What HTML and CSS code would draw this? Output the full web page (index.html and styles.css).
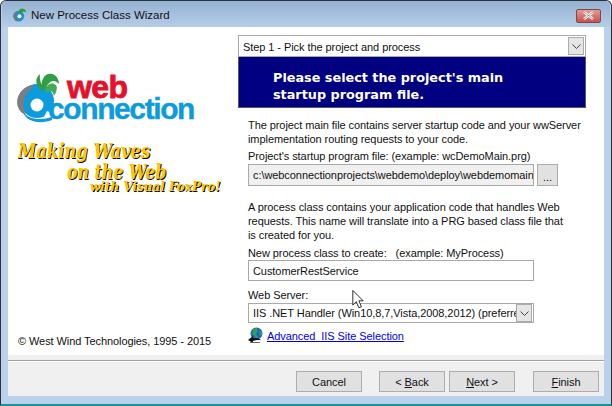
FILE: index.html
```html
<!DOCTYPE html>
<html lang="en">
<head>
    <meta charset="UTF-8">
    <title>New Process Class Wizard</title>
    <link rel="stylesheet" href="styles.css">
</head>
<body>
    <div class="window">
        <div class="titlebar">
            <svg class="app-icon" width="15" height="15" viewBox="0 0 18 18">
                <circle cx="8" cy="11" r="6.5" fill="#1b8fd0"/>
                <path d="M4 6a7 7 0 0 0 1 11l2-1a6 6 0 0 1-1-8z" fill="#777"/>
                <circle cx="9" cy="11" r="2.4" fill="#fff"/>
                <path d="M8 6c0-3 3-5 5-4 2 0 4 2 4 4-2-1-4-1-5 0l-1 3z" fill="#2e9b3f"/>
            </svg>
            <span class="title">New Process Class Wizard</span>
            <div class="close-btn">
                <svg width="13" height="9" viewBox="0 0 13 9"><path d="M2 1l9 7M11 1l-9 7" stroke="#fff" stroke-width="2.4" fill="none"/><path d="M2 1l9 7M11 1l-9 7" stroke="#555" stroke-width=".6" fill="none"/></svg>
            </div>
        </div>
        <div class="client">
            <div class="main">
                <div class="left">
                    <div class="logo">
                        <svg class="logo-mark" width="50" height="60" viewBox="0 0 50 60">
                            <circle cx="22" cy="31" r="17" fill="#0c9bdc"/>
                            <path d="M8 42C14 50 26 51 37 46L37 50C26 54 12 53 8 42Z" fill="#0c9bdc"/>
                            <path d="M17 15C6 17 0 28 3 37C5 42 8 44 11 45C8 40 8 32 10 27C12 22 15 19 19 17Z" fill="#7b7d80"/>
                            <circle cx="22" cy="35" r="6.5" fill="#fff"/>
                            <path d="M32 41a7 7 0 0 1 5 6l-9 2z" fill="#fff"/>
                            <path d="M26 20C20 15 20 8 25 4C24 9 26 14 29 19Z" fill="#2f9e45"/>
                            <path d="M27 20C25 10 30 2 37 4C41 5 44 9 44 14C39 9 34 10 30 20Z" fill="#2f9e45"/>
                            <path d="M30 21C32 13 37 12 41 15C43 18 41 23 39 26C38 21 35 19 31 23Z" fill="#43ab55"/>
                        </svg>
                        <div class="logo-web">web</div>
                        <div class="logo-conn">connection</div>
                    </div>
                    <div class="slogan">
                        <div class="slogan-line line-1">Making Waves</div>
                        <div class="slogan-line line-2">on the Web</div>
                        <div class="slogan-line line-3">with Visual FoxPro!</div>
                    </div>
                    <div class="copyright">© West Wind Technologies, 1995 - 2015</div>
                </div>
                <div class="right">
                    <div class="combo step-combo">
                        <span class="combo-text">Step 1 - Pick the project and process</span>
                        <span class="combo-arrow"><svg width="9" height="5" viewBox="0 0 9 5"><path d="M.5.5l4 4 4-4" stroke="#444" fill="none"/></svg></span>
                    </div>
                    <div class="banner">Please select the project's main<br>startup program file.</div>
                    <div class="form">
                        <p class="para first">The project main file contains server startup code and your wwServer<br>implementation routing requests to your code.</p>
                        <label class="field-label">Project's startup program file: (example: wcDemoMain.prg)</label>
                        <div class="file-row">
                            <div class="textbox readonly">c:\webconnectionprojects\webdemo\deploy\webdemomain.prg</div>
                            <div class="browse-btn">...</div>
                        </div>
                        <p class="para second">A process class contains your application code that handles Web<br>requests. This name will translate into a PRG based class file that<br>is created for you.</p>
                        <label class="field-label tight">New process class to create: &nbsp; (example: MyProcess)</label>
                        <div class="textbox class-name">CustomerRestService</div>
                        <label class="field-label server-label">Web Server:</label>
                        <div class="combo server-combo">
                            <span class="combo-text">IIS .NET Handler (Win10,8,7,Vista,2008,2012) (preferred)</span>
                            <span class="combo-arrow"><svg width="9" height="5" viewBox="0 0 9 5"><path d="M.5.5l4 4 4-4" stroke="#444" fill="none"/></svg></span>
                        </div>
                        <div class="link-row">
                            <svg width="17" height="17" viewBox="0 0 17 17">
                                <circle cx="9.5" cy="6.5" r="6" fill="#1f5fd0"/>
                                <path d="M6 2l4-1 1 3-2 3 2 3-2 2-1-3-3-2zM12 3l3 2v3l-2 1z" fill="#2fa34a"/>
                                <path d="M1 13l5-4v2c3 0 6 0 8 2-2 0-5 0-8 1v2z" fill="#111"/>
                                <path d="M3 15h10v1H3z" fill="#666"/>
                            </svg>
                            <a class="link">Advanced &nbsp;IIS Site Selection</a>
                        </div>
                    </div>
                </div>
            </div>
            <div class="footer">
                <div class="divider"></div>
                <div class="buttons">
                    <div class="btn">Cancel</div>
                    <div class="btn back-btn">&lt; <u>B</u>ack</div>
                    <div class="btn next-btn"><u>N</u>ext &gt;</div>
                    <div class="btn finish-btn"><u>F</u>inish</div>
                </div>
            </div>
        </div>
        <!-- mouse pointer -->
        <svg class="cursor" width="12" height="19" viewBox="0 0 13 22">
            <path d="M.5.5v17l4-4 3 7 3-1-3-7h5z" fill="#fff" stroke="#111"/>
        </svg>
    </div>
</body>
</html>
```

FILE: styles.css
```css
html, body {
    margin: 0;
    padding: 0;
    background-color: #fff;
}
.window {
    position: relative;
    width: 612px;
    height: 406px;
    box-sizing: border-box;
    padding: 0 8px 8px 8px;
    background-color: #b9d1ea;
    border: 1px solid #2a3138;
    border-bottom: 2px solid #1c8f9a;
    border-radius: 6px 6px 0 0;
    overflow: hidden;
    font-family: "Liberation Sans", sans-serif;
    font-size: 11px;
    letter-spacing: -.07px;
    color: #111;
    display: flex;
    flex-direction: column;
}
.titlebar {
    height: 26px;
    margin: 0 -7px;
    padding: 0 9px 0 10px;
    flex: none;
    display: flex;
    align-items: center;
    background: linear-gradient(#96b2d2, #b4cde8);
}
.app-icon {
    margin-top: 1px;
    margin-right: 4px;
}
.title {
    font-size: 11.5px;
    letter-spacing: 0;
    color: #111;
    margin-top: 1px;
    flex: 1;
}
.close-btn {
    width: 25px;
    height: 14px;
    margin-top: 3px;
    box-sizing: border-box;
    border: 1px solid #7c4a4a;
    border-radius: 2px;
    background: linear-gradient(#e59a94, #c8524d);
    display: flex;
    align-items: center;
    justify-content: center;
}
.client {
    margin: 0 -1px;
    flex: 1;
    display: flex;
    flex-direction: column;
    background-color: #f0f0f0;
}
.main {
    height: 328px;
    flex: none;
    display: flex;
    background-color: #fff;
}
.left {
    width: 230px;
    flex: none;
    display: flex;
    flex-direction: column;
}
/* logo artwork: the letters sit on the mark, so they are placed over it */
.logo {
    position: relative;
    width: 190px;
    height: 60px;
    margin-top: 43px;
    margin-left: 7px;
}
.logo-mark {
    position: absolute;
    left: 0;
    top: 0;
}
.logo-web {
    position: absolute;
    left: 52px;
    top: 0;
    font-weight: bold;
    font-size: 32px;
    line-height: 34px;
    letter-spacing: -.6px;
    color: #e5112b;
    -webkit-text-stroke: .8px #e5112b;
}
.logo-conn {
    position: absolute;
    left: 33px;
    top: 23px;
    font-weight: bold;
    font-size: 30px;
    line-height: 32px;
    letter-spacing: -1.4px;
    color: #0c9bdc;
    -webkit-text-stroke: .4px #0c9bdc;
}
.slogan {
    margin-top: 11px;
    margin-left: 10px;
}
.slogan-line {
    font-family: "DejaVu Serif", serif;
    font-weight: bold;
    font-style: italic;
    letter-spacing: 0;
    color: #ffc800;
    text-shadow: 1px 1px 0 #000;
    white-space: nowrap;
    transform-origin: left center;
}
.line-1 {
    font-size: 20px;
    line-height: 20px;
    transform: scaleX(.82);
}
.line-2 {
    font-size: 20px;
    line-height: 19px;
    margin-top: 2px;
    margin-left: 49px;
    transform: scaleX(.79);
}
.line-3 {
    font-size: 12px;
    line-height: 13px;
    margin-top: -1px;
    margin-left: 72px;
}
.copyright {
    margin-top: auto;
    margin-bottom: 7px;
    margin-left: 10px;
    letter-spacing: -.08px;
    line-height: 14px;
}
.right {
    width: 348px;
    flex: none;
    display: flex;
    flex-direction: column;
    padding-top: 8px;
}
.combo {
    box-sizing: border-box;
    display: flex;
    align-items: center;
    border: 1px solid #a9a9a9;
    background-color: #fff;
}
.combo-text {
    flex: 1;
    padding-left: 4px;
    white-space: nowrap;
    overflow: hidden;
}
.combo-arrow {
    width: 16px;
    height: 18px;
    flex: none;
    margin-right: 1px;
    box-sizing: border-box;
    border: 1px solid #acacac;
    background-color: #e5e5e5;
    display: flex;
    align-items: center;
    justify-content: center;
}
.step-combo {
    height: 22px;
}
.step-combo .combo-text {
    padding-top: 1px;
}
.banner {
    height: 51px;
    box-sizing: border-box;
    padding: 12px 0 0 34px;
    background-color: #000080;
    border: 1px solid #55556a;
    border-top: none;
    color: #fff;
    font-family: "DejaVu Sans", sans-serif;
    font-weight: bold;
    font-size: 12.8px;
    letter-spacing: 0;
    line-height: 17px;
}
.form {
    padding-left: 10px;
}
.para {
    margin: 0;
    line-height: 14px;
    white-space: nowrap;
}
.para.first {
    margin-top: 10px;
}
.para.second {
    margin-top: 14px;
}
.field-label {
    display: block;
    line-height: 14px;
    margin-top: 3px;
    margin-bottom: 1px;
}
.field-label.tight {
    margin-top: 4px;
    margin-bottom: 0;
}
.file-row {
    display: flex;
    gap: 3px;
}
.textbox {
    box-sizing: border-box;
    width: 286px;
    border: 1px solid #a9a9a9;
    padding-left: 4px;
    white-space: nowrap;
    overflow: hidden;
    line-height: 21px;
}
.readonly {
    width: 286px;
    height: 22px;
    line-height: 21px;
    background-color: #f0f0f0;
}
.browse-btn {
    width: 21px;
    height: 22px;
    box-sizing: border-box;
    border: 1px solid #acacac;
    background-color: #e1e1e1;
    text-align: center;
    line-height: 24px;
}
.class-name {
    height: 21px;
}
.server-label {
    margin-top: 7px;
}
.server-combo {
    width: 286px;
    height: 20px;
}
.link-row {
    display: flex;
    align-items: center;
    gap: 3px;
    margin-top: 4px;
    margin-left: -1px;
}
.link {
    color: #0000ee;
    text-decoration: underline;
}
.footer {
    flex: 1;
    padding-top: 5px;
}
.divider {
    height: 1px;
    background-color: #a0a0a0;
    border-bottom: 1px solid #fff;
}
.buttons {
    display: flex;
    margin-top: 9px;
    padding-left: 288px;
}
.btn {
    width: 66px;
    height: 21px;
    box-sizing: border-box;
    border: 1px solid #adadad;
    background-color: #e1e1e1;
    text-align: center;
    line-height: 20px;
}
.back-btn {
    margin-left: 17px;
}
.next-btn {
    margin-left: 4px;
}
.finish-btn {
    margin-left: 18px;
}
.cursor {
    position: absolute;
    left: 351px;
    top: 289px;
}
```
